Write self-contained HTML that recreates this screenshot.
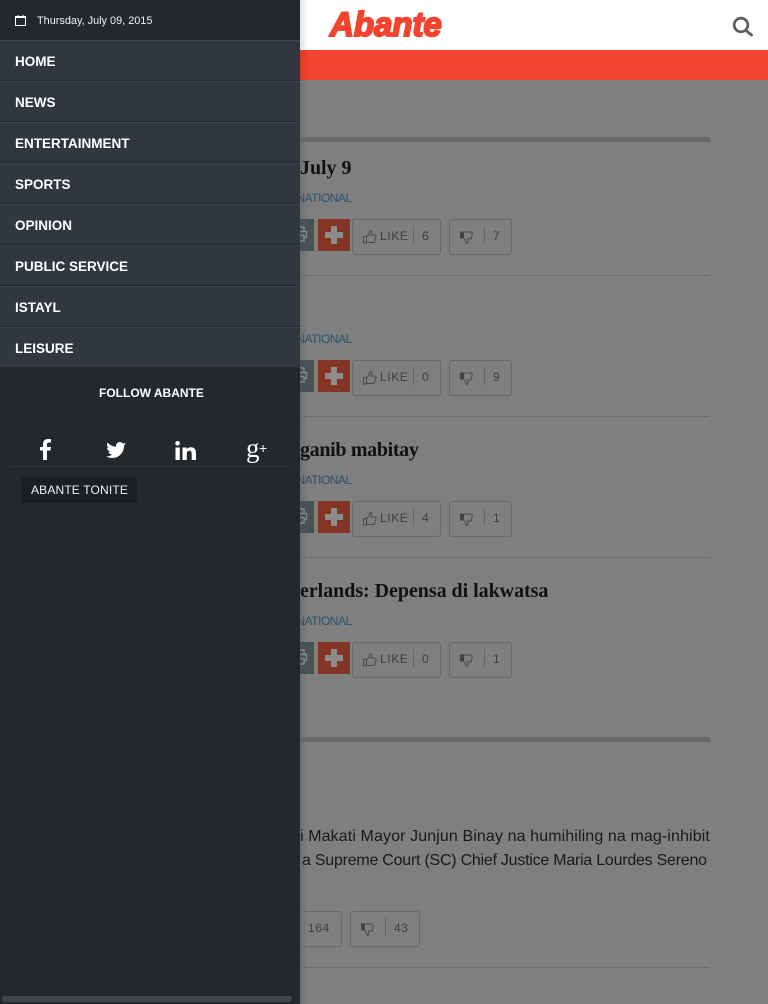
<!DOCTYPE html>
<html><head><meta charset="utf-8"><title>Abante</title>
<style>
*{box-sizing:border-box;margin:0;padding:0}
html,body{width:768px;height:1004px;overflow:hidden;background:#7f7f7f;font-family:"Liberation Sans",sans-serif}
.a{position:absolute;white-space:nowrap}
#page{position:relative;width:768px;height:1004px;overflow:hidden}
.rule{position:absolute;left:300px;height:1px;width:410px;background:#6c6c6c}
.thick{position:absolute;left:300px;width:410px;height:5px;background:#696969}
.h{position:absolute;font:bold 20px/24px "Liberation Serif",serif;color:#111;white-space:nowrap;letter-spacing:-.04px}
.nat{position:absolute;left:296.500px;font-size:12px;line-height:14px;color:#2a5470;white-space:nowrap;letter-spacing:-.5px}
.box{position:absolute;height:36px;border:1px solid #696969;border-radius:3px}
.print{position:absolute;left:300px;width:14px;height:32px;background:#475252}
.plus{position:absolute;left:318px;width:32px;height:32px;background:#853526}
.plus:before{content:"";position:absolute;left:7px;top:13px;width:18px;height:6px;background:#8c8c8c}
.plus:after{content:"";position:absolute;left:13px;top:7px;width:6px;height:18px;background:#8c8c8c}
.t{position:absolute;font-size:12px;line-height:14px;color:#3f3f3f;letter-spacing:.6px;white-space:nowrap}
.sep{position:absolute;width:1px;height:18px;background:#666}
.body{position:absolute;font-size:16px;line-height:24px;color:#191919;white-space:nowrap}
#nav{position:absolute;left:0;top:0;width:300px;height:1004px;background:#23282c}
.item{position:absolute;left:0;width:300px;height:41px;background:#31373e;border-top:1px solid #3c4556;box-shadow:inset 0 -1px 0 #23282c;color:#fff;font-weight:bold;font-size:13.5px;line-height:42px;padding-left:15px;white-space:nowrap}
</style></head><body><div id="page">
<div class="a" style="left:300px;top:0;width:468px;height:50px;background:#fff"></div>
<div class="a" style="left:300px;top:50px;width:468px;height:30px;background:#f4432f"></div>
<div class="a" style="left:300px;top:0;width:8px;height:1004px;background:linear-gradient(to right,rgba(0,0,0,.12),rgba(0,0,0,0))"></div>
<div class="a" style="left:330px;top:6px;font:italic bold 34px/38px 'Liberation Sans',sans-serif;color:#f4432f;-webkit-text-stroke:2px #f4432f;transform:scaleX(.97);transform-origin:left">Abante</div>
<svg class="a" style="left:731px;top:15px" width="23" height="22" viewBox="0 0 23 22"><circle cx="10" cy="10" r="6.800" fill="none" stroke="#5f5f5f" stroke-width="2.800"/><path d="M15 15.500l5.500 4.500" stroke="#5f5f5f" stroke-width="2.800" stroke-linecap="round"/></svg>

<div class="thick" style="top:137px"></div>
<div class="h" style="left:300px;top:156px">July 9</div>
<div class="nat" style="top:191px">NATIONAL</div>
<div class="print" style="top:219px"></div><div class="plus" style="top:219px"></div>
<svg class="a" style="left:300px;top:226px" width="8" height="16" viewBox="0 0 8 16"><path d="M0 1h4v4.500M0 5.500h6.500v6H4M0 9.500h4V15H0" fill="none" stroke="#7d8888" stroke-width="1.500"/></svg>
<div class="box" style="left:352px;top:219px;width:89px"></div><div class="t" style="left:380px;top:229px">LIKE</div><div class="sep" style="left:413px;top:226px"></div><div class="t" style="left:422px;top:229px">6</div>
<svg class="a" style="left:362px;top:229px" width="15" height="15" viewBox="0 0 15 15"><path d="M1.500 7.500h3V14h-3zM4.500 8L7 5l1-3.500c1.800 0 2 2 1 4.500h4c1 0 1.200 1 .9 1.800l-1.300 4.700c-.2.700-.7 1-1.400 1H6.500l-2-.8" fill="none" stroke="#4a4a4a" stroke-width="1"/></svg>
<div class="box" style="left:449px;top:219px;width:63px"></div><div class="sep" style="left:484px;top:226px"></div><div class="t" style="left:493px;top:229px">7</div>
<svg class="a" style="left:459px;top:230px" width="15" height="15" viewBox="0 0 15 15"><path d="M1 1.500h4v7H1z" fill="#444"/><path d="M5 2h7c.8 0 1.300.6 1.200 1.300l-.7 4.700c-.1.700-.6 1-1.300 1H8.500c.6 1.500.6 4-1 4.500L6 10 5 8.500" fill="none" stroke="#4a4a4a" stroke-width="1"/></svg>
<div class="rule" style="top:275px"></div>

<div class="nat" style="top:332px">NATIONAL</div>
<div class="print" style="top:360px"></div><div class="plus" style="top:360px"></div>
<svg class="a" style="left:300px;top:367px" width="8" height="16" viewBox="0 0 8 16"><path d="M0 1h4v4.500M0 5.500h6.500v6H4M0 9.500h4V15H0" fill="none" stroke="#7d8888" stroke-width="1.500"/></svg>
<div class="box" style="left:352px;top:360px;width:89px"></div><div class="t" style="left:380px;top:370px">LIKE</div><div class="sep" style="left:413px;top:367px"></div><div class="t" style="left:422px;top:370px">0</div>
<svg class="a" style="left:362px;top:370px" width="15" height="15" viewBox="0 0 15 15"><path d="M1.500 7.500h3V14h-3zM4.500 8L7 5l1-3.500c1.800 0 2 2 1 4.500h4c1 0 1.200 1 .9 1.800l-1.300 4.700c-.2.700-.7 1-1.400 1H6.500l-2-.8" fill="none" stroke="#4a4a4a" stroke-width="1"/></svg>
<div class="box" style="left:449px;top:360px;width:63px"></div><div class="sep" style="left:484px;top:367px"></div><div class="t" style="left:493px;top:370px">9</div>
<svg class="a" style="left:459px;top:371px" width="15" height="15" viewBox="0 0 15 15"><path d="M1 1.500h4v7H1z" fill="#444"/><path d="M5 2h7c.8 0 1.300.6 1.200 1.300l-.7 4.700c-.1.700-.6 1-1.300 1H8.500c.6 1.500.6 4-1 4.500L6 10 5 8.500" fill="none" stroke="#4a4a4a" stroke-width="1"/></svg>
<div class="rule" style="top:416px"></div>

<div class="h" style="left:300px;top:438px;letter-spacing:-.33px">ganib mabitay</div>
<div class="nat" style="top:473px">NATIONAL</div>
<div class="print" style="top:501px"></div><div class="plus" style="top:501px"></div>
<svg class="a" style="left:300px;top:508px" width="8" height="16" viewBox="0 0 8 16"><path d="M0 1h4v4.500M0 5.500h6.500v6H4M0 9.500h4V15H0" fill="none" stroke="#7d8888" stroke-width="1.500"/></svg>
<div class="box" style="left:352px;top:501px;width:89px"></div><div class="t" style="left:380px;top:511px">LIKE</div><div class="sep" style="left:413px;top:508px"></div><div class="t" style="left:422px;top:511px">4</div>
<svg class="a" style="left:362px;top:511px" width="15" height="15" viewBox="0 0 15 15"><path d="M1.500 7.500h3V14h-3zM4.500 8L7 5l1-3.500c1.800 0 2 2 1 4.500h4c1 0 1.200 1 .9 1.800l-1.300 4.700c-.2.700-.7 1-1.400 1H6.500l-2-.8" fill="none" stroke="#4a4a4a" stroke-width="1"/></svg>
<div class="box" style="left:449px;top:501px;width:63px"></div><div class="sep" style="left:484px;top:508px"></div><div class="t" style="left:493px;top:511px">1</div>
<svg class="a" style="left:459px;top:512px" width="15" height="15" viewBox="0 0 15 15"><path d="M1 1.500h4v7H1z" fill="#444"/><path d="M5 2h7c.8 0 1.300.6 1.200 1.300l-.7 4.700c-.1.700-.6 1-1.300 1H8.500c.6 1.500.6 4-1 4.500L6 10 5 8.500" fill="none" stroke="#4a4a4a" stroke-width="1"/></svg>
<div class="rule" style="top:557px"></div>

<div class="h" style="left:300px;top:579px">erlands: Depensa di lakwatsa</div>
<div class="nat" style="top:614px">NATIONAL</div>
<div class="print" style="top:642px"></div><div class="plus" style="top:642px"></div>
<svg class="a" style="left:300px;top:649px" width="8" height="16" viewBox="0 0 8 16"><path d="M0 1h4v4.500M0 5.500h6.500v6H4M0 9.500h4V15H0" fill="none" stroke="#7d8888" stroke-width="1.500"/></svg>
<div class="box" style="left:352px;top:642px;width:89px"></div><div class="t" style="left:380px;top:652px">LIKE</div><div class="sep" style="left:413px;top:649px"></div><div class="t" style="left:422px;top:652px">0</div>
<svg class="a" style="left:362px;top:652px" width="15" height="15" viewBox="0 0 15 15"><path d="M1.500 7.500h3V14h-3zM4.500 8L7 5l1-3.500c1.800 0 2 2 1 4.500h4c1 0 1.200 1 .9 1.800l-1.300 4.700c-.2.700-.7 1-1.400 1H6.500l-2-.8" fill="none" stroke="#4a4a4a" stroke-width="1"/></svg>
<div class="box" style="left:449px;top:642px;width:63px"></div><div class="sep" style="left:484px;top:649px"></div><div class="t" style="left:493px;top:652px">1</div>
<svg class="a" style="left:459px;top:653px" width="15" height="15" viewBox="0 0 15 15"><path d="M1 1.500h4v7H1z" fill="#444"/><path d="M5 2h7c.8 0 1.300.6 1.200 1.300l-.7 4.700c-.1.700-.6 1-1.300 1H8.500c.6 1.500.6 4-1 4.500L6 10 5 8.500" fill="none" stroke="#4a4a4a" stroke-width="1"/></svg>

<div class="thick" style="top:737px"></div>
<div class="body" style="left:300px;top:825px;letter-spacing:.11px">i Makati Mayor Junjun Binay na humihiling na mag-inhibit</div>
<div class="body" style="left:302px;top:849px;letter-spacing:-.24px">a Supreme Court (SC) Chief Justice Maria Lourdes Sereno</div>
<div class="box" style="left:280px;top:911px;width:62px"></div><div class="t" style="left:308px;top:921px">164</div>
<div class="box" style="left:350px;top:911px;width:70px"></div><div class="sep" style="left:385px;top:918px"></div><div class="t" style="left:394px;top:921px">43</div>
<svg class="a" style="left:360px;top:922px" width="15" height="15" viewBox="0 0 15 15"><path d="M1 1.500h4v7H1z" fill="#444"/><path d="M5 2h7c.8 0 1.300.6 1.200 1.300l-.7 4.700c-.1.700-.6 1-1.300 1H8.500c.6 1.500.6 4-1 4.500L6 10 5 8.500" fill="none" stroke="#4a4a4a" stroke-width="1"/></svg>
<div class="rule" style="top:967px"></div>

<div id="nav">
<svg class="a" style="left:15px;top:15px" width="11" height="11" viewBox="0 0 11 11"><path d="M.5 1.500h10v9H.5z" fill="none" stroke="#fff"/><path d="M.5 2h10v1H.5z" fill="#fff"/><path d="M3 0v2M8 0v2" stroke="#fff"/></svg>
<div class="a" style="left:37px;top:14px;font-size:10.9px;line-height:15px;color:#f2f2f2">Thursday, July 09, 2015</div>
<div class="item" style="top:40px">HOME</div>
<div class="item" style="top:81px">NEWS</div>
<div class="item" style="top:122px">ENTERTAINMENT</div>
<div class="item" style="top:163px">SPORTS</div>
<div class="item" style="top:204px">OPINION</div>
<div class="item" style="top:245px">PUBLIC SERVICE</div>
<div class="item" style="top:286px">ISTAYL</div>
<div class="item" style="top:327px;height:40px;box-shadow:none">LEISURE</div>
<div class="a" style="left:99px;top:386px;font-size:12px;line-height:15px;font-weight:bold;color:#fff">FOLLOW ABANTE</div>
<svg class="a" style="left:40px;top:439px" width="12" height="21" viewBox="0 0 12 21"><path d="M3 21V11.500H0V8h3V5c0-3 2-5 5-5h3v3.500H9C7.700 3.500 7 4 7 5.300V8h4l-.6 3.500H7V21z" fill="#fff"/></svg>
<svg class="a" style="left:106px;top:441px" width="20" height="18" viewBox="0 0 20 18"><path d="M20 3c-.7.400-1.500.600-2.300.700.800-.500 1.500-1.300 1.800-2.200-.8.500-1.700.800-2.600 1C16 1.600 15 1 13.800 1 11.300 1 9.500 3.300 10 5.800 6.700 5.600 3.700 4 1.600 1.500.500 3.400 1.100 5.800 2.900 7c-.7 0-1.300-.2-1.900-.5 0 1.900 1.400 3.700 3.300 4.100-.6.200-1.200.2-1.900.1.500 1.600 2 2.800 3.800 2.800C4.500 14.900 2.300 15.500 0 15.300 1.800 16.400 4 17 6.300 17c7.600 0 11.900-6.400 11.700-12.200.8-.5 1.500-1.100 2-1.800z" fill="#fff"/></svg>
<svg class="a" style="left:175px;top:441px" width="21" height="19" viewBox="0 0 21 19"><path d="M.5 6.500h4.300V19H.5zM.3 2.300a2.300 2.300 0 1 1 4.600 0 2.300 2.300 0 0 1-4.600 0zM7.500 6.500h4.200v1.800c.8-1.300 2.100-2.100 4.100-2.100 3.500 0 5.200 2.200 5.200 5.900V19h-4.300v-6.200c0-1.900-.7-3-2.300-3-1.700 0-2.600 1.300-2.600 3V19H7.500z" fill="#fff"/></svg>
<div class="a" style="left:246px;top:434px;font:27px/28px 'Liberation Serif',serif;color:#fff">g</div>
<div class="a" style="left:259px;top:440px;font:14px/16px 'Liberation Sans',sans-serif;color:#fff">+</div>
<div class="a" style="left:10px;top:466px;width:280px;height:1px;background:#32373c"></div>
<div class="a" style="left:21px;top:478px;width:116px;height:25px;background:#1b1f22;color:#f2f2f2;font-size:12px;line-height:25px;padding-left:10px;letter-spacing:.16px">ABANTE TONITE</div>
<div class="a" style="left:2px;top:996px;width:290px;height:6px;border-radius:3px;background:#3f4549"></div>
</div>
</div></body></html>
